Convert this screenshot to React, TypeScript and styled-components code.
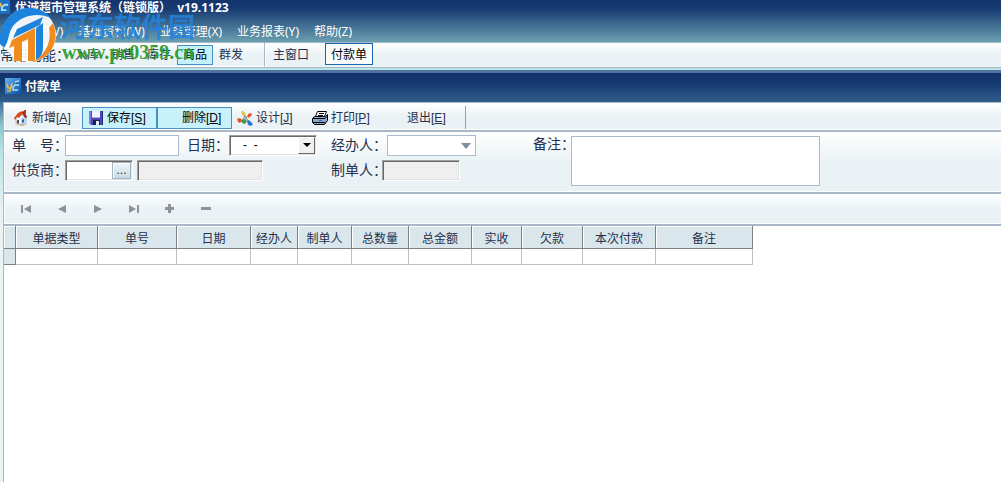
import React from "react";
import styled, { createGlobalStyle, css } from "styled-components";

const line = "#a9b6c6";
const ink = "#262f4c";
const silver = "linear-gradient(#ffffff, #eaf2f5 50%, #eaf2f5)";

const GlobalStyle = createGlobalStyle`
  * { box-sizing: border-box; }
  body {
    margin: 0;
    background: #fff;
    color: ${ink};
    font: 12px/16px "Liberation Sans", "Noto Sans CJK SC", sans-serif;
    overflow-x: hidden;
  }
  button, input, select, textarea {
    font: inherit;
    color: inherit;
    margin: 0;
    border-radius: 0;
  }
`;

const Page = styled.div`
  min-height: 100vh;
  display: flex;
  flex-direction: column;
`;

const AppHeader = styled.header`
  background: linear-gradient(#14356e, #163a72 20%, #6a9fb0);
  color: #fff;
  font-family: "Noto Sans", "Noto Sans CJK SC", sans-serif;
  border-bottom: 1px solid ${line};
  padding-bottom: 2px;
`;

const TitleBar = styled.div`
  height: 24px;
  display: flex;
  align-items: flex-start;
  overflow: hidden;
`;

const AppTitle = styled.h1`
  margin: 0 0 0 5px;
  font-size: 12px;
  line-height: 16px;
  font-weight: 700;
  white-space: pre;
`;

const MenuBar = styled.nav`
  height: 16px;
  display: flex;
  gap: 15px;
  padding-left: 1px;
`;

const MenuLink = styled.a`
  color: #fff;
  text-decoration: none;
  white-space: nowrap;
`;

const QuickBar = styled.div`
  height: 25px;
  display: flex;
  background: ${silver};
  border-bottom: 1px solid ${line};
`;

const QuickGroup = styled.div`
  width: 265px;
  display: flex;
  align-items: center;
  border-right: 1px solid ${line};
  border-bottom: 1px solid #fff;
  box-shadow: 1px 0 #fff;
`;

const QuickLabel = styled.span`
  width: 69px;
  font-size: 14px;
  white-space: nowrap;
`;

const QuickButton = styled.button<{ $active?: boolean }>`
  width: 36px;
  height: 20px;
  padding: 1px 0 0;
  background: ${(p) => (p.$active ? "#c5f1fb" : "transparent")};
  border: 1px solid ${(p) => (p.$active ? "#4a90c4" : "transparent")};
  color: ${(p) => (p.$active ? "#000" : ink)};
`;

const WindowTabs = styled.div`
  display: flex;
  align-items: flex-start;
  padding-left: 8px;
  gap: 16px;
`;

const WindowTab = styled.button<{ $active?: boolean }>`
  height: 22px;
  padding: 2px ${(p) => (p.$active ? 5 : 0)}px 0;
  background: ${(p) => (p.$active ? "#f8fbfc" : "transparent")};
  border: ${(p) => (p.$active ? "1px solid #1467ae" : "0")};
  color: ${(p) => (p.$active ? "#000" : ink)};
`;

const Frame = styled.main`
  flex: 1;
  display: flex;
  flex-direction: column;
  border-top: 2px solid #b9e4e4;
`;

const FrameTitle = styled.div`
  height: 32px;
  display: flex;
  align-items: center;
  gap: 4px;
  padding: 0 0 3px 5px;
  border-top: 3px solid #5472a0;
  background: linear-gradient(#12326e, #14386f 35%, #2f5f8c);
`;

const FrameName = styled.h2`
  margin: 0;
  font: 700 12px/16px "Noto Sans CJK SC", sans-serif;
  color: #fff;
`;

const Workspace = styled.div`
  flex: 1;
  display: flex;
  background: linear-gradient(#3c7096, #8fc6cc 24px, #b9e4e4 50px, #eaf2f5 110px, #eaf2f5);
  padding-left: 3px;
`;

const Content = styled.div`
  flex: 1;
  min-width: 0;
  background: #fff;
  border-left: 1px solid ${line};
`;

const bar = css`
  background: ${silver};
  border-bottom: 2px solid ${line};
  box-shadow: inset 1px 0 #fff, inset 0 -1px #fff;
`;

const ToolBar = styled.div`
  ${bar}
  height: 30px;
  display: flex;
  align-items: center;
  border-top: 1px solid ${line};
  padding: 2px 0 0 4px;
`;

const ToolButton = styled.button<{ $width: number; $active?: boolean }>`
  width: ${(p) => p.$width}px;
  height: 22px;
  display: flex;
  align-items: center;
  gap: 3px;
  padding: 0 0 0 ${(p) => (p.$active ? 5 : 4)}px;
  white-space: nowrap;
  background: ${(p) => (p.$active ? "#c8f2fb" : "transparent")};
  border: 1px solid ${(p) => (p.$active ? "#4a90c4" : "transparent")};
  color: ${(p) => (p.$active ? "#000" : ink)};
`;

const IconSlot = styled.span`
  width: 16px;
  height: 16px;
  flex: none;
`;

const Divider = styled.span`
  width: 1px;
  height: 23px;
  background: #969ca4;
`;

const Form = styled.form`
  ${bar}
  height: 62px;
  display: flex;
  align-items: flex-start;
  padding: 2px 0 0 8px;
`;

const FieldColumn = styled.div<{ $width: number }>`
  width: ${(p) => p.$width}px;
  display: flex;
  flex-direction: column;
  gap: 3px;
`;

const FieldRow = styled.div`
  height: 22px;
  display: flex;
  align-items: center;
`;

const Label = styled.label<{ $width: number }>`
  width: ${(p) => p.$width}px;
  flex: none;
  font-size: 14px;
  line-height: 20px;
  white-space: nowrap;
`;

const flat = css`
  background: #fff;
  border: 1px solid #a9bacb;
`;

const sunken = css`
  border: 1px solid;
  border-color: #a0a0a0 #fff #fff #a0a0a0;
  box-shadow: inset 1px 1px #696969, inset -1px -1px #e3e3e3;
  padding: 1px;
`;

const NumberInput = styled.input`
  ${flat}
  width: 114px;
  height: 21px;
  margin-right: 8px;
`;

const ReadOnlyInput = styled.input<{ $width: number }>`
  ${sunken}
  width: ${(p) => p.$width}px;
  height: 21px;
  background: #efefef;
`;

const ComboBox = styled.div<{ $width: number }>`
  ${sunken}
  width: ${(p) => p.$width}px;
  height: 21px;
  display: flex;
  background: #fff;
`;

const ComboInput = styled.input`
  flex: 1;
  min-width: 0;
  padding: 0 0 0 12px;
  border: 0;
  background: transparent;
  color: #000;
`;

const DropButton = styled.button`
  width: 17px;
  padding: 0;
  display: flex;
  align-items: center;
  justify-content: center;
  background: #f0f0f0;
  border: 1px solid;
  border-color: #fff #696969 #696969 #fff;
`;

const LookupButton = styled.button`
  width: 19px;
  padding: 0;
  line-height: 12px;
  background: linear-gradient(#eef5f8, #c8dbe4);
  border: 1px solid #9fb4c4;
  box-shadow: inset 1px 1px #fff;
`;

const SelectBox = styled.div`
  position: relative;
  width: 89px;
  height: 21px;
`;

const Select = styled.select`
  ${flat}
  width: 100%;
  height: 100%;
  appearance: none;
`;

const SelectArrow = styled.svg`
  position: absolute;
  right: 5px;
  top: 8px;
  pointer-events: none;
`;

const Memo = styled.textarea`
  ${flat}
  width: 249px;
  height: 50px;
  margin-top: 2px;
  resize: none;
`;

const Navigator = styled.div`
  ${bar}
  height: 32px;
  display: flex;
  padding-left: 4px;
`;

const NavButton = styled.button`
  width: 36px;
  padding: 0;
  border: 0;
  background: transparent;
  display: flex;
  align-items: center;
  justify-content: center;
`;

const Grid = styled.table`
  width: 749px;
  table-layout: fixed;
  border-collapse: separate;
  border-spacing: 0;
`;

const HeadCell = styled.th`
  height: 23px;
  padding: 3px 0 0;
  font-weight: 400;
  white-space: nowrap;
  background: #d9e7ed;
  border-right: 1px solid #808080;
  border-bottom: 1px solid #808080;
  box-shadow: inset 1px 1px #fff;
`;

const Cell = styled.td<{ $marker?: boolean }>`
  height: 16px;
  padding: 0;
  background: ${(p) => (p.$marker ? "#d9e7ed" : "#fff")};
  border-right: 1px solid ${(p) => (p.$marker ? "#808080" : "#c0c0c0")};
  border-bottom: 1px solid ${(p) => (p.$marker ? "#808080" : "#c0c0c0")};
`;

const Watermark = styled.div`
  position: absolute;
  left: 0;
  top: 6px;
  display: flex;
  gap: 2px;
  pointer-events: none;
`;

const WatermarkText = styled.div`
  padding-top: 4px;
  white-space: nowrap;
`;

const SiteName = styled.div`
  font: 700 27px/32px "Noto Sans CJK SC", sans-serif;
  color: #2382dc;
  opacity: 0.85;
`;

const SiteUrl = styled.div`
  font: 700 20px/20px "Liberation Serif", serif;
  color: #35a035;
  padding-left: 2px;
`;

const BrandIcon = () => (
  <svg width="16" height="16" viewBox="0 0 16 16" aria-hidden="true">
    <defs>
      <linearGradient id="brand" x1="0" y1="0" x2="1" y2="1">
        <stop offset="0" stopColor="#62b4ea" />
        <stop offset="1" stopColor="#0b4fb0" />
      </linearGradient>
    </defs>
    <rect width="16" height="16" fill="url(#brand)" />
    <path d="M2 6l1 4h3M7 5l-2 8H2" fill="none" stroke="#f2b83c" strokeWidth="1.7" />
    <path d="M14 7h-4l-2 2v3h5M10 4l4-1" fill="none" stroke="#a8e0f8" strokeWidth="1.5" />
    <path d="M11 5h4" stroke="#274a78" />
  </svg>
);

const HomeIcon = () => (
  <svg width="16" height="16" viewBox="0 0 16 16" aria-hidden="true">
    <ellipse cx="8" cy="14" rx="6" ry="1.6" fill="#c9cdd4" />
    <path d="M3 7l3-3 7 3v6l-5 2-5-3z" fill="#f4f8ff" stroke="#8ca5cc" strokeWidth=".7" />
    <path d="M8 8l5-2v7l-5 2z" fill="#bcd4f4" />
    <path d="M1 8l4-5 4-2 5 6-1 1-4-4-3 4-2-1-2 3z" fill="#d64a20" />
    <path d="M9 2l2-1 3 6-2 1z" fill="#9c2815" />
    <path d="M11 0h2v4h-2z" fill="#b04020" />
    <path d="M4 10h2v4l-2-1z" fill="#7a4a30" />
    <path d="M9 10l2-1v3l-2 1z" fill="#2760bc" />
    <path d="M7 15h4" stroke="#e0a030" />
  </svg>
);

const SaveIcon = () => (
  <svg width="16" height="16" viewBox="0 0 16 16" aria-hidden="true">
    <path d="M1 1h14v14H3l-2-2z" fill="#4a48ba" />
    <path d="M1 1h2v13l-2-1z" fill="#7b7be0" />
    <path d="M14 1h1v14h-1z" fill="#26267c" />
    <path d="M4 1h8v7H4z" fill="#f2f3fa" />
    <path d="M4 7h8v1H4z" fill="#aab0d0" />
    <path d="M5 10h7v5H5z" fill="#1e1e4a" />
    <path d="M8 11h3v4H8z" fill="#e8e8f2" />
  </svg>
);

const DesignIcon = () => (
  <svg width="16" height="16" viewBox="0 0 16 16" aria-hidden="true">
    <path d="M4 11l8-6M6 4l6 8M3 11l5 1" stroke="#6a6f76" />
    <path d="M5 1l3 2v3L5 4z" fill="#f1d65c" stroke="#b89a30" strokeWidth=".5" />
    <path d="M11 4l3-1 1 2-3 3-1-1z" fill="#e8552a" />
    <path d="M0 9l3-1 2 2-2 3-2-1z" fill="#e34f28" />
    <path d="M5 10l3-1 2 2-2 3-3-1z" fill="#3c9c48" />
    <path d="M10 11l2-1 4 4-2 2-3-1z" fill="#3270d6" />
    <circle cx="8" cy="8" r="1.3" fill="#dfe3e8" stroke="#555" strokeWidth=".5" />
  </svg>
);

const PrintIcon = () => (
  <svg width="16" height="16" viewBox="0 0 16 16" aria-hidden="true">
    <path d="M5.500 1.500h9l-2 5h-9z" fill="#fff" stroke="#000" />
    <path d="M7 3.500h5M6 5.500h5" stroke="#000" />
    <path d="M.5 8.500l2-2h11l2-2v6l-3 4h-10l-2-2z" fill="#8fa4cc" stroke="#000" />
    <path d="M1 8.500h12l2-2M1 12.500h12" fill="none" stroke="#000" />
    <path d="M7 10h3v1H7z" fill="#2d62dc" />
  </svg>
);

const SiteLogo = () => (
  <svg width="58" height="58" viewBox="0 0 58 58" aria-hidden="true">
    <circle cx="29" cy="29" r="27" fill="#fff" fillOpacity=".92" />
    <path d="M0 38C-2 20 10 4 26 2c10-1 20 3 25 10C38 6 22 9 13 20 8 27 9 36 4 42z" fill="#1c84dc" />
    <path d="M17 23l26-12-3 8-27 13z" fill="#1c84dc" />
    <path d="M53 17c7 17-1 35-20 39 12-7 19-20 16-34z" fill="#f08c1e" />
    <path d="M12 34l23-12v33h-7V33l-6 3v19h-8V40l-5 2z" fill="#f08c1e" />
    <path d="M36 22l7-5v24c0 6-2 10-7 13z" fill="#1c84dc" />
  </svg>
);

const navShapes = [
  { name: "首记录", d: "M0 1h2v8H0zM10 1v8L3 5z" },
  { name: "上一条", d: "M9 1v8L1 5z" },
  { name: "下一条", d: "M1 1v8l8-4z" },
  { name: "末记录", d: "M8 1h2v8H8zM0 1v8l7-4z" },
  { name: "增加", d: "M3 0h3v3h3v3H6v3H3V6H0V3h3z" },
  { name: "减少", d: "M0 3h10v3H0z" },
];

const columns = [
  { title: "单据类型", width: 82 },
  { title: "单号", width: 79 },
  { title: "日期", width: 74 },
  { title: "经办人", width: 47 },
  { title: "制单人", width: 54 },
  { title: "总数量", width: 57 },
  { title: "总金额", width: 63 },
  { title: "实收", width: 50 },
  { title: "欠款", width: 61 },
  { title: "本次付款", width: 73 },
  { title: "备注", width: 97 },
];

const menus = ["系统维护(V)", "基础资料(W)", "业务管理(X)", "业务报表(Y)", "帮助(Z)"];
const shortcuts = ["入库", "销售", "库存", "商品", "群发"];

const tools = [
  { text: "新增", key: "A", width: 74, icon: <HomeIcon /> },
  { text: "保存", key: "S", width: 75, icon: <SaveIcon />, active: true },
  { text: "删除", key: "D", width: 75, icon: null, active: true },
  { text: "设计", key: "J", width: 75, icon: <DesignIcon /> },
  { text: "打印", key: "P", width: 76, icon: <PrintIcon /> },
  { text: "退出", key: "E", width: 82, icon: null },
];

export default function App() {
  return (
    <Page>
      <GlobalStyle />
      <AppHeader>
        <TitleBar>
          <svg width="10" height="14" viewBox="5 1 11 15" aria-hidden="true">
            <rect width="16" height="16" fill="#1d6fc4" />
            <path d="M14 6h-4l-3 3v3h5" fill="none" stroke="#a8e0f8" strokeWidth="2" />
            <path d="M5 4l2 5" stroke="#f2b83c" strokeWidth="2" />
          </svg>
          <AppTitle>优诚超市管理系统（链锁版）  v19.1123</AppTitle>
        </TitleBar>
        <MenuBar>
          {menus.map((m) => (
            <MenuLink href="#" key={m}>{m}</MenuLink>
          ))}
        </MenuBar>
      </AppHeader>

      <QuickBar>
        <QuickGroup>
          <QuickLabel>常用功能：</QuickLabel>
          {shortcuts.map((s) => (
            <QuickButton key={s} $active={s === "商品"}>{s}</QuickButton>
          ))}
        </QuickGroup>
        <WindowTabs>
          <WindowTab>主窗口</WindowTab>
          <WindowTab $active>付款单</WindowTab>
        </WindowTabs>
      </QuickBar>

      <Frame>
        <FrameTitle>
          <BrandIcon />
          <FrameName>付款单</FrameName>
        </FrameTitle>
        <Workspace>
          <Content>
            <ToolBar>
              {tools.map((t) => (
                <ToolButton key={t.key} $width={t.width} $active={t.active}>
                  <IconSlot>{t.icon}</IconSlot>
                  <span>{t.text}[<u>{t.key}</u>]</span>
                </ToolButton>
              ))}
              <Divider />
            </ToolBar>

            <Form>
              <FieldColumn $width={319}>
                <FieldRow>
                  <Label $width={53} htmlFor="billNo">单　号：</Label>
                  <NumberInput id="billNo" />
                  <Label $width={42} htmlFor="billDate">日期：</Label>
                  <ComboBox $width={88}>
                    <ComboInput id="billDate" defaultValue="-  -" />
                    <DropButton type="button" aria-label="选择日期">
                      <svg width="8" height="4" viewBox="0 0 8 4">
                        <path d="M0 0h8L4 4z" fill="#000" />
                      </svg>
                    </DropButton>
                  </ComboBox>
                </FieldRow>
                <FieldRow>
                  <Label $width={53} htmlFor="supplier">供货商：</Label>
                  <ComboBox $width={68}>
                    <ComboInput id="supplier" />
                    <LookupButton type="button" aria-label="选择供货商">...</LookupButton>
                  </ComboBox>
                  <Label $width={4} htmlFor="supplierName" aria-label="供货商名称" />
                  <ReadOnlyInput id="supplierName" $width={126} readOnly />
                </FieldRow>
              </FieldColumn>
              <FieldColumn $width={202}>
                <FieldRow>
                  <Label $width={56} htmlFor="handler">经办人：</Label>
                  <SelectBox>
                    <Select id="handler" />
                    <SelectArrow width="10" height="6" viewBox="0 0 10 6" aria-hidden="true">
                      <path d="M0 0h10L5 6z" fill="#7d8f9b" />
                    </SelectArrow>
                  </SelectBox>
                </FieldRow>
                <FieldRow>
                  <Label $width={51} htmlFor="maker">制单人：</Label>
                  <ReadOnlyInput id="maker" $width={78} readOnly />
                </FieldRow>
              </FieldColumn>
              <Label $width={38} htmlFor="memo">备注：</Label>
              <Memo id="memo" />
            </Form>

            <Navigator>
              {navShapes.map((n) => (
                <NavButton key={n.name} aria-label={n.name}>
                  <svg width="10" height="10" viewBox="0 0 10 10">
                    <path d={n.d} fill="#8d9399" />
                  </svg>
                </NavButton>
              ))}
            </Navigator>

            <Grid>
              <colgroup>
                <col width={12} />
                {columns.map((c) => (
                  <col key={c.title} width={c.width} />
                ))}
              </colgroup>
              <thead>
                <tr>
                  <HeadCell />
                  {columns.map((c) => (
                    <HeadCell key={c.title} scope="col">{c.title}</HeadCell>
                  ))}
                </tr>
              </thead>
              <tbody>
                <tr>
                  <Cell $marker />
                  {columns.map((c) => (
                    <Cell key={c.title} />
                  ))}
                </tr>
              </tbody>
            </Grid>
          </Content>
        </Workspace>
      </Frame>

      <Watermark>
        <SiteLogo />
        <WatermarkText>
          <SiteName>河东软件园</SiteName>
          <SiteUrl>www.pc0359.cn</SiteUrl>
        </WatermarkText>
      </Watermark>
    </Page>
  );
}
